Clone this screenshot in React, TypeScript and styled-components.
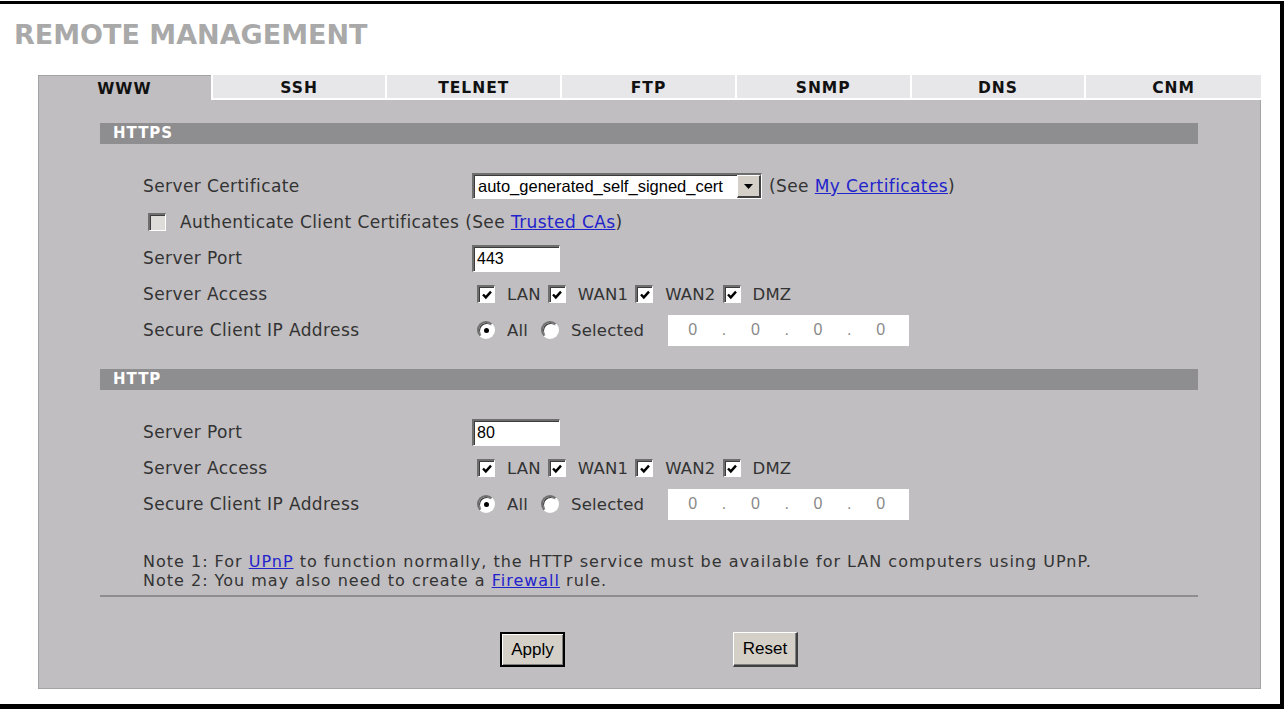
import React from "react";
import styled, { createGlobalStyle } from "styled-components";

const GlobalStyle = createGlobalStyle`
  html, body {
    margin: 0;
    padding: 0;
    background: #ffffff;
  }
  body {
    font-family: "DejaVu Sans", Verdana, sans-serif;
    color: #333333;
  }
`;

const tabs = ["WWW", "SSH", "TELNET", "FTP", "SNMP", "DNS", "CNM"];
const zones = ["LAN", "WAN1", "WAN2", "DMZ"];

function CheckBox({ checked = false, disabled = false }: { checked?: boolean; disabled?: boolean }) {
  return (
    <Box $disabled={disabled}>
      {checked && (
        <svg width="12" height="12" viewBox="0 0 12 12">
          <path d="M2 5.5 L4.8 8.4 L10 2.6" stroke="#000" strokeWidth="2.4" fill="none" />
        </svg>
      )}
    </Box>
  );
}

function Radio({ checked = false }: { checked?: boolean }) {
  return <RadioRing>{checked && <RadioDot />}</RadioRing>;
}

function IpField() {
  return (
    <IpBox>
      <span>0</span>
      <i>.</i>
      <span>0</span>
      <i>.</i>
      <span>0</span>
      <i>.</i>
      <span>0</span>
    </IpBox>
  );
}

function AccessRows({ port }: { port: string }) {
  return (
    <>
      <Row>
        <Label>Server Port</Label>
        <TextInput>{port}</TextInput>
      </Row>
      <Row>
        <Label>Server Access</Label>
        <Options $gap={7}>
          {zones.map((z) => (
            <Option key={z}>
              <CheckBox checked />
              <span>{z}</span>
            </Option>
          ))}
        </Options>
      </Row>
      <Row>
        <Label>Secure Client IP Address</Label>
        <Options $gap={13}>
          <Option>
            <Radio checked />
            <span>All</span>
          </Option>
          <Option>
            <Radio />
            <span>Selected</span>
          </Option>
          <IpField />
        </Options>
      </Row>
    </>
  );
}

export default function App() {
  return (
    <>
      <GlobalStyle />
      <Frame>
        <Title>REMOTE MANAGEMENT</Title>
        <Card>
          <TabBar>
            {tabs.map((t, i) => (
              <Tab key={t} $active={i === 0}>
                {t}
              </Tab>
            ))}
          </TabBar>
          <Panel>
            <SectionBar>HTTPS</SectionBar>
            <Rows>
              <Row>
                <Label>Server Certificate</Label>
                <Inline>
                  <Select>
                    <span>auto_generated_self_signed_cert</span>
                    <DropButton>
                      <svg width="9" height="5" viewBox="0 0 9 5">
                        <path d="M0 0 H9 L4.5 5 Z" fill="#000" />
                      </svg>
                    </DropButton>
                  </Select>
                  <Note>
                    (See <Link href="#">My Certificates</Link>)
                  </Note>
                </Inline>
              </Row>
              <WideRow>
                <CheckBox disabled />
                <Note>
                  Authenticate Client Certificates (See <Link href="#">Trusted CAs</Link>)
                </Note>
              </WideRow>
              <AccessRows port="443" />
            </Rows>

            <SectionBar>HTTP</SectionBar>
            <Rows>
              <AccessRows port="80" />
            </Rows>

            <Notes>
              <p>
                Note 1: For <Link href="#">UPnP</Link> to function normally, the HTTP service must be
                available for LAN computers using UPnP.
              </p>
              <p>
                Note 2: You may also need to create a <Link href="#">Firewall</Link> rule.
              </p>
            </Notes>
            <Divider />
            <Buttons>
              <Button $default>Apply</Button>
              <Button>Reset</Button>
            </Buttons>
          </Panel>
        </Card>
      </Frame>
    </>
  );
}

const Frame = styled.div`
  box-sizing: border-box;
  width: 1284px;
  height: 708px;
  margin-top: 1px;
  border-top: 3px solid #000;
  border-right: 4px solid #000;
  border-bottom: 5px solid #000;
  display: flex;
  flex-direction: column;
`;

const Title = styled.h1`
  margin: 15px 0 0;
  padding-left: 14px;
  height: 32px;
  line-height: 32px;
  font-size: 27px;
  font-weight: bold;
  color: #a9a9a9;
`;

const Card = styled.div`
  margin: 24px 0 0 38px;
  width: 1223px;
`;

const TabBar = styled.div`
  display: grid;
  grid-template-columns: repeat(7, 1fr);
  height: 25px;
`;

const Tab = styled.div<{ $active?: boolean }>`
  display: flex;
  align-items: center;
  justify-content: center;
  font-size: 15.5px;
  font-weight: bold;
  letter-spacing: 1px;
  color: #111;
  background: ${(p) => (p.$active ? "#c0bec1" : "#e7e6e8")};
  border-right: 2px solid #ffffff;
  border-bottom: ${(p) => (p.$active ? "none" : "2px solid #ffffff")};
  box-shadow: ${(p) => (p.$active ? "inset 1px 1px 0 #a3a2a4" : "none")};
  padding-top: 2px;

  &:last-child {
    border-right: none;
  }
`;

const Panel = styled.div`
  box-sizing: border-box;
  height: 589px;
  padding: 23px 62px 0 61px;
  background: #c0bec1;
  border: 1px solid #a3a2a4;
  border-top: none;
`;

const SectionBar = styled.div`
  height: 21px;
  line-height: 21px;
  padding-left: 13px;
  background: #8e8d8f;
  color: #ffffff;
  font-size: 15px;
  font-weight: bold;
  letter-spacing: 1px;
`;

const Rows = styled.div`
  padding: 24px 0 21px;
`;

const Row = styled.div`
  display: grid;
  grid-template-columns: 372px 1fr;
  align-items: center;
  height: 36px;
`;

const WideRow = styled.div`
  display: flex;
  align-items: center;
  gap: 14px;
  height: 36px;
  padding-left: 48px;
`;

const Label = styled.span`
  padding-left: 43px;
  font-size: 17px;
  letter-spacing: 0.4px;
`;

const Inline = styled.div`
  display: flex;
  align-items: center;
  gap: 7px;
`;

const Note = styled.span`
  font-size: 17px;
  letter-spacing: 0.4px;
`;

const Link = styled.a`
  color: #2323cc;
  text-decoration: underline;
`;

const sunken = `
  box-sizing: border-box;
  border-style: solid;
  border-width: 2px 1px 1px 2px;
  border-color: #6e6e6e #ffffff #ffffff #6e6e6e;
  box-shadow: inset 1px 1px 0 #3c3c3c;
`;

const Select = styled.div`
  ${sunken}
  display: flex;
  align-items: center;
  justify-content: space-between;
  width: 290px;
  height: 26px;
  padding-left: 4px;
  background: #ffffff;
  font-family: "Liberation Sans", Arial, sans-serif;
  font-size: 16.5px;
  color: #000;
`;

const DropButton = styled.span`
  box-sizing: border-box;
  display: flex;
  align-items: center;
  justify-content: center;
  width: 24px;
  height: 100%;
  background: #d4d0c8;
  border-style: solid;
  border-width: 1px 2px 2px 1px;
  border-color: #ffffff #404040 #404040 #ffffff;
`;

const TextInput = styled.div`
  ${sunken}
  width: 88px;
  height: 27px;
  padding-left: 3px;
  line-height: 24px;
  background: #ffffff;
  font-family: "Liberation Sans", Arial, sans-serif;
  font-size: 16px;
  color: #000;
`;

const Options = styled.div<{ $gap: number }>`
  display: flex;
  align-items: center;
  padding-left: 5px;
  gap: ${(p) => p.$gap}px;
`;

const Option = styled.label`
  display: flex;
  align-items: center;
  gap: 12px;
  font-size: 16.5px;
  letter-spacing: 0.2px;
`;

const Box = styled.span<{ $disabled?: boolean }>`
  ${sunken}
  display: inline-flex;
  align-items: center;
  justify-content: center;
  width: 18px;
  height: 18px;
  background: ${(p) => (p.$disabled ? "#dedcd9" : "#ffffff")};
`;

const RadioRing = styled.span`
  box-sizing: border-box;
  display: inline-flex;
  align-items: center;
  justify-content: center;
  width: 18px;
  height: 18px;
  border-radius: 50%;
  background: #ffffff;
  border: 2px solid;
  border-color: #6e6e6e #ffffff #ffffff #6e6e6e;
  box-shadow: inset 1px 1px 0 #3c3c3c;
`;

const RadioDot = styled.span`
  width: 5px;
  height: 5px;
  border-radius: 50%;
  background: #000;
`;

const IpBox = styled.div`
  display: flex;
  align-items: center;
  justify-content: space-between;
  margin-left: 11px;
  width: 241px;
  height: 31px;
  box-sizing: border-box;
  padding: 0 24px 0 20px;
  background: #ffffff;
  font-family: "Liberation Sans", Arial, sans-serif;
  font-size: 16px;
  color: #8a8a8a;

  i {
    font-style: normal;
  }
`;

const Notes = styled.div`
  margin-top: 10px;
  padding-left: 43px;
  font-size: 16px;
  letter-spacing: 1px;

  p {
    margin: 0;
    line-height: 18.6px;
  }
`;

const Divider = styled.div`
  margin-top: 5px;
  height: 2px;
  background: #8e8d8f;
`;

const Buttons = styled.div`
  display: flex;
  justify-content: center;
  gap: 168px;
  margin-top: 35px;
`;

const Button = styled.button<{ $default?: boolean }>`
  box-sizing: border-box;
  width: 65px;
  height: 35px;
  padding: 0;
  font-family: "Liberation Sans", Arial, sans-serif;
  font-size: 17px;
  color: #000;
  background: #d4d0c8;
  border-style: solid;
  border-width: ${(p) => (p.$default ? "2px" : "1px 2px 2px 1px")};
  border-color: ${(p) => (p.$default ? "#000" : "#ffffff #404040 #404040 #ffffff")};
  box-shadow: ${(p) =>
    p.$default ? "inset 1px 1px 0 #ffffff, inset -1px -1px 0 #808080" : "inset -1px -1px 0 #808080"};
`;
